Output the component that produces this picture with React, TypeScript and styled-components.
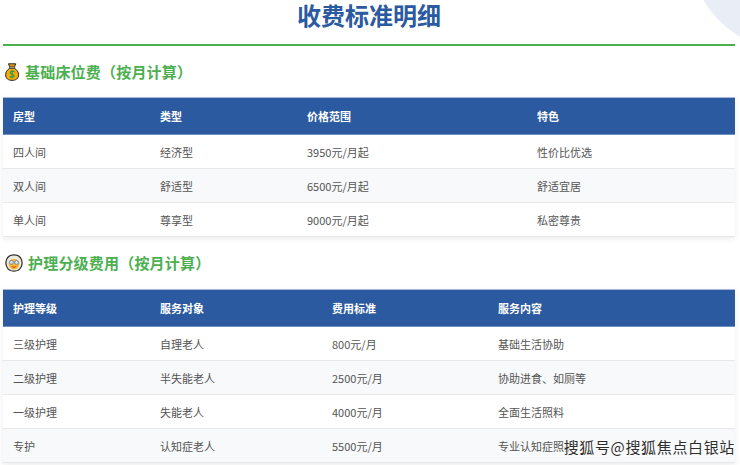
import { FC, ReactNode } from 'react';
import styled, { createGlobalStyle } from 'styled-components';

const GlobalStyle = createGlobalStyle`
	html, body {
		margin: 0;
		padding: 0;
		background: #ffffff;
	}
	body {
		font-family: "Noto Sans CJK SC", "Liberation Sans", sans-serif;
	}
`;

const Page = styled.div`
	position: relative;
	width: 740px;
	height: 465px;
	overflow: hidden;
	padding: 0 5px 0 3px;
	box-sizing: border-box;
	background: #ffffff;
`;

const Corner = styled.div`
	position: absolute;
	top: -150px;
	right: -150px;
	width: 200px;
	height: 200px;
	border-radius: 50%;
	background: #e9eef6;
`;

const Title = styled.h1`
	position: relative;
	margin: 0;
	height: 44px;
	border-bottom: 2px solid #4caf50;
	color: #2b5aa0;
	font-family: "Liberation Sans", "Noto Sans CJK SC", sans-serif;
	font-size: 24px;
	font-weight: 700;
	line-height: 33px;
	text-align: center;
`;

const SectionHeading = styled.h2<{ $height: number }>`
	display: flex;
	align-items: center;
	gap: 5px;
	margin: 0;
	padding-left: 2px;
	height: ${({ $height }) => $height}px;
	color: #4caf50;
	font-size: 15px;
	font-weight: 700;
	letter-spacing: 0.2px;
	line-height: 20px;
`;

const Table = styled.table`
	position: relative;
	width: 732px;
	border-collapse: collapse;
	table-layout: fixed;
	background: #ffffff;
	box-shadow: 0 2px 6px rgba(0, 0, 0, 0.08);
	font-size: 11px;
`;

const HeadCell = styled.th`
	height: 37px;
	padding: 0 10px;
	box-sizing: border-box;
	border-top: 1px solid #a9bad6;
	border-bottom: 1px solid #6f8fc0;
	background: #2b5aa0;
	color: #ffffff;
	font-weight: 700;
	text-align: left;
`;

const Row = styled.tr`
	&:nth-child(even) {
		background: #f8f9fa;
	}
`;

const Cell = styled.td`
	height: 34px;
	padding: 0 10px;
	box-sizing: border-box;
	border-bottom: 1px solid #e8e8e8;
	color: #555555;
	white-space: nowrap;
`;

const Watermark = styled.div`
	position: absolute;
	right: 5px;
	bottom: 8px;
	color: #2e2e2e;
	font-size: 15px;
	line-height: 20px;
	letter-spacing: 0.65px;
	text-shadow: 0 0 2px #ffffff, 0 0 2px #ffffff, 0 0 3px #ffffff;
`;

const MoneyBag: FC = () => (
	<svg width="15" height="18" viewBox="0 0 15 18">
		<path d="M3.4 0.8h7.4l-1.6 3.6h-4.2z" fill="#e8960c" stroke="#2b2b2b" strokeWidth="1" />
		<rect x="4.4" y="3.6" width="5.4" height="1.5" fill="#f7e3a8" stroke="#3a3a3a" strokeWidth="0.6" />
		<path
			d="M4.8 5.2C2.2 6.8 0.6 9.2 0.6 11.8c0 3.8 2.8 5.6 6.5 5.6s6.5-1.8 6.5-5.6c0-2.6-1.6-5-4.2-6.6z"
			fill="#f5a90f"
			stroke="#2b2b2b"
			strokeWidth="1"
		/>
		<path
			d="M9.2 8.8C8.6 8 5.4 7.8 5.2 9.6c-0.2 2 4 1.4 3.9 3.4-0.1 1.6-3.2 1.6-4.2 0.5M7.1 7v8.4"
			fill="none"
			stroke="#2f9e44"
			strokeWidth="1.2"
		/>
	</svg>
);

const Elder: FC = () => (
	<svg width="18" height="18" viewBox="0 0 18 18">
		<path
			d="M9 0.8c3.6 0 6.2 1.6 7.4 4.6 0.8 2.2 0.8 5 0 7-1.2 3-3.8 4.8-7.4 4.8s-6.2-1.8-7.4-4.8c-0.8-2-0.8-4.8 0-7C2.8 2.4 5.4 0.8 9 0.8z"
			fill="#eee9e0"
			stroke="#2b2b2b"
			strokeWidth="1.2"
		/>
		<path d="M3.6 9C3.8 6.2 6 5 9 5s5.2 1.2 5.4 4c0.2 3.6-2.2 6.4-5.4 6.4S3.4 12.6 3.6 9z" fill="#f7b32b" />
		<circle cx="6.4" cy="8.4" r="1.9" fill="#dfe6ea" stroke="#5f86b5" strokeWidth="0.9" />
		<circle cx="11.6" cy="8.4" r="1.9" fill="#dfe6ea" stroke="#5f86b5" strokeWidth="0.9" />
		<path d="M7 12.6c1.2 0.8 2.8 0.8 4 0" fill="none" stroke="#d9531e" strokeWidth="1.2" />
	</svg>
);

type DataTableProps = {
	widths: number[];
	head: string[];
	rows: string[][];
};

const DataTable: FC<DataTableProps> = ({ widths, head, rows }) => (
	<Table>
		<colgroup>
			{widths.map((w, idx) => (
				<col key={idx} style={{ width: w }} />
			))}
		</colgroup>
		<thead>
			<tr>
				{head.map((h) => (
					<HeadCell key={h}>{h}</HeadCell>
				))}
			</tr>
		</thead>
		<tbody>
			{rows.map((row, idx) => (
				<Row key={idx}>
					{row.map((c) => (
						<Cell key={c}>{c}</Cell>
					))}
				</Row>
			))}
		</tbody>
	</Table>
);

const Heading: FC<{ icon: ReactNode; height: number; children: ReactNode }> = ({ icon, height, children }) => (
	<SectionHeading $height={height}>
		{icon}
		<span>{children}</span>
	</SectionHeading>
);

export default function App() {
	return (
		<>
			<GlobalStyle />
			<Page>
				<Corner />
				<Title>收费标准明细</Title>
				<Heading icon={<MoneyBag />} height={51}>
					基础床位费（按月计算）
				</Heading>
				<DataTable
					widths={[147, 147, 230, 208]}
					head={['房型', '类型', '价格范围', '特色']}
					rows={[
						['四人间', '经济型', '3950元/月起', '性价比优选'],
						['双人间', '舒适型', '6500元/月起', '舒适宜居'],
						['单人间', '尊享型', '9000元/月起', '私密尊贵'],
					]}
				/>
				<Heading icon={<Elder />} height={52}>
					护理分级费用（按月计算）
				</Heading>
				<DataTable
					widths={[147, 172, 166, 247]}
					head={['护理等级', '服务对象', '费用标准', '服务内容']}
					rows={[
						['三级护理', '自理老人', '800元/月', '基础生活协助'],
						['二级护理', '半失能老人', '2500元/月', '协助进食、如厕等'],
						['一级护理', '失能老人', '4000元/月', '全面生活照料'],
						['专护', '认知症老人', '5500元/月', '专业认知症照护'],
					]}
				/>
				<Watermark>搜狐号@搜狐焦点白银站</Watermark>
			</Page>
		</>
	);
}
